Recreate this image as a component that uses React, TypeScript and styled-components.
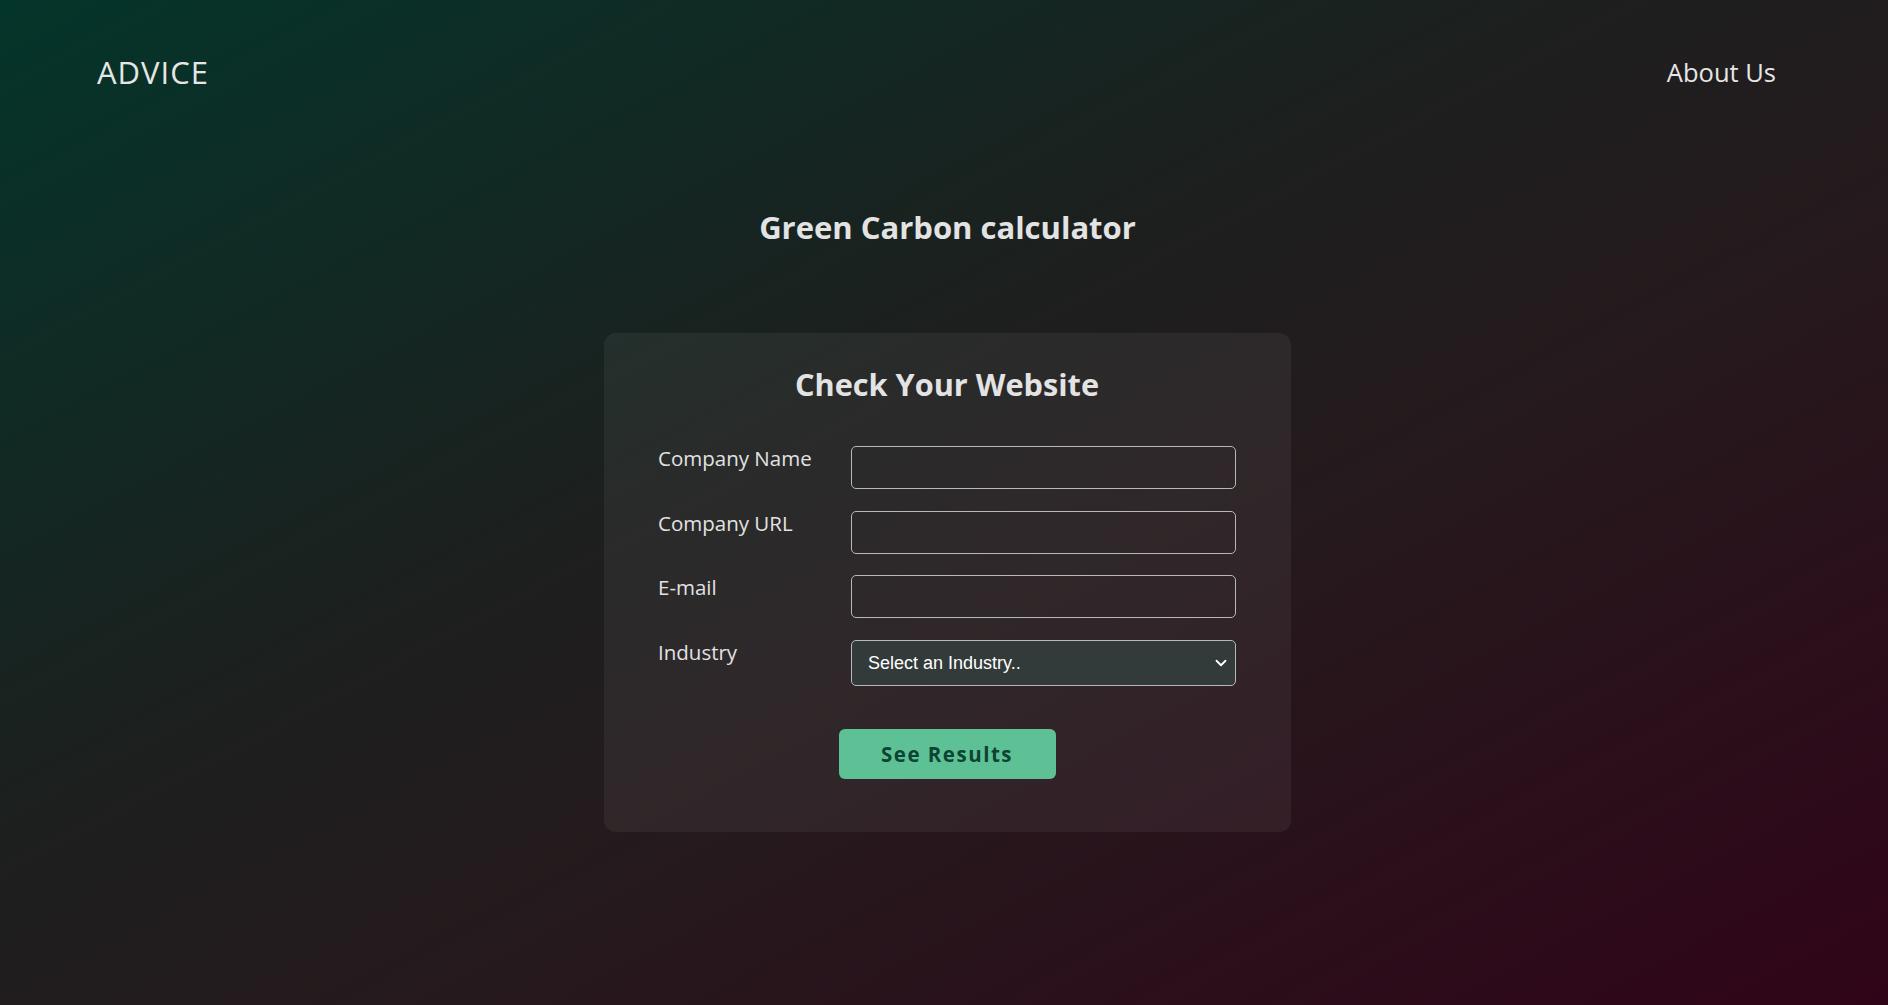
import React from "react";
import styled, { createGlobalStyle } from "styled-components";
import { ChevronDown } from "lucide-react";

const GlobalStyle = createGlobalStyle`
  * { box-sizing: border-box; }
  html, body { margin: 0; padding: 0; }
  body {
    font-family: "Open Sans", "Noto Sans", sans-serif;
    color: #e4e4e4;
    background: #1f1e1e;
  }
`;

const Page = styled.div`
  min-height: 100vh;
  background: linear-gradient(to bottom right, #04352a 0%, #1d1f1e 42%, #251a1d 60%, #300418 100%);
  display: flex;
  flex-direction: column;
`;

const Header = styled.header`
  display: flex;
  justify-content: space-between;
  align-items: flex-start;
  padding: 51px 112px 0 97px;
  height: 96px;
`;

const Logo = styled.div`
  font-size: 31px;
  font-weight: 400;
  letter-spacing: 1px;
  color: #e6e6e6;
  line-height: 42px;
`;

const NavLink = styled.a`
  font-size: 25.5px;
  color: #e6e6e6;
  text-decoration: none;
  line-height: 36px;
  margin-top: 3px;
`;

const Main = styled.main`
  display: flex;
  flex-direction: column;
  align-items: center;
  padding-left: 7px;
`;

const Title = styled.h1`
  margin: 111px 0 0;
  font-size: 31px;
  font-weight: 700;
  color: #e3e3e3;
  line-height: 40px;
`;

const Card = styled.form`
  margin-top: 86px;
  width: 687px;
  height: 499px;
  border-radius: 12px;
  background: rgba(255, 255, 255, 0.055);
  padding: 30px 55px 0 54px;
  display: flex;
  flex-direction: column;
`;

const CardTitle = styled.h2`
  margin: 0;
  text-align: center;
  font-size: 30.7px;
  font-weight: 700;
  color: #e3e3e3;
  line-height: 42px;
`;

const Fields = styled.div`
  margin-top: 41px;
  display: flex;
  flex-direction: column;
  gap: 21.5px;
`;

const Row = styled.div`
  display: grid;
  grid-template-columns: 193px 1fr;
  align-items: start;
`;

const Label = styled.label`
  font-size: 20.5px;
  color: #e2e2e2;
  line-height: 24px;
`;

const TextInput = styled.input`
  height: 43px;
  width: 100%;
  border: 1px solid #b8b8b8;
  border-radius: 5px;
  background: transparent;
  color: #e6e6e6;
  padding: 0 12px;
  font-size: 16px;
  font-family: "Liberation Sans", Arial, sans-serif;
  outline: none;
`;

const SelectWrap = styled.div`
  position: relative;
  width: 100%;
`;

const Select = styled.select`
  appearance: none;
  -webkit-appearance: none;
  height: 46px;
  width: 100%;
  border: 1px solid #b8b8b8;
  border-radius: 5px;
  background: #323b3a;
  color: #ffffff;
  padding: 0 30px 0 16px;
  font-size: 18px;
  font-family: "Liberation Sans", Arial, sans-serif;
  outline: none;
`;

const Chevron = styled(ChevronDown)`
  position: absolute;
  right: 6px;
  top: 50%;
  transform: translateY(-50%);
  color: #ffffff;
  pointer-events: none;
`;

const Actions = styled.div`
  display: flex;
  justify-content: center;
  margin-top: 43px;
`;

const Button = styled.button`
  width: 217px;
  height: 50px;
  border: none;
  border-radius: 6px;
  background: #5ec196;
  color: #0c4433;
  font-family: "Open Sans", "Noto Sans", sans-serif;
  font-size: 20.5px;
  font-weight: 700;
  letter-spacing: 1.5px;
  cursor: pointer;
`;

const fields = [
  { id: "name", label: "Company Name" },
  { id: "url", label: "Company URL" },
  { id: "email", label: "E-mail" },
];

export default function App() {
  return (
    <>
      <GlobalStyle />
      <Page>
        <Header>
          <Logo>ADVICE</Logo>
          <NavLink href="#">About Us</NavLink>
        </Header>
        <Main>
          <Title>Green Carbon calculator</Title>
          <Card onSubmit={(e) => e.preventDefault()}>
            <CardTitle>Check Your Website</CardTitle>
            <Fields>
              {fields.map((f) => (
                <Row key={f.id}>
                  <Label htmlFor={f.id}>{f.label}</Label>
                  <TextInput id={f.id} type="text" />
                </Row>
              ))}
              <Row>
                <Label htmlFor="industry">Industry</Label>
                <SelectWrap>
                  <Select id="industry" defaultValue="">
                    <option value="">Select an Industry..</option>
                    <option value="tech">Technology</option>
                    <option value="retail">Retail</option>
                    <option value="finance">Finance</option>
                  </Select>
                  <Chevron size={18} strokeWidth={2.4} />
                </SelectWrap>
              </Row>
            </Fields>
            <Actions>
              <Button type="submit">See Results</Button>
            </Actions>
          </Card>
        </Main>
      </Page>
    </>
  );
}
